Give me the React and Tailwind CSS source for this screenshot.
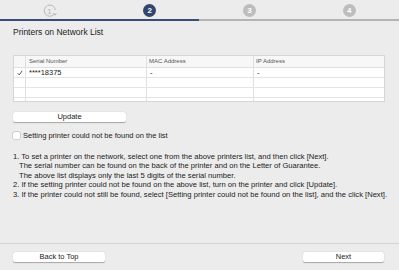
const STEPS = [1, 2, 3, 4];

const ROWS = [
  { checked: true, serial: "****18375", mac: "-", ip: "-" },
  { checked: false, serial: "", mac: "", ip: "" },
  { checked: false, serial: "", mac: "", ip: "" },
];

const NOTES = [
  { text: "1. To set a printer on the network, select one from the above printers list, and then click [Next].", indent: false },
  { text: "The serial number can be found on the back of the printer and on the Letter of Guarantee.", indent: true },
  { text: "The above list displays only the last 5 digits of the serial number.", indent: true },
  { text: "2. If the setting printer could not be found on the above list, turn on the printer and click [Update].", indent: false },
  { text: "3. If the printer could not still be found, select [Setting printer could not be found on the list], and the click [Next].", indent: false },
];

// First step is done: an open ring with an arrowhead around the number.
const DoneStep = () => (
  <svg width="14" height="14" viewBox="0 0 14 14" fill="none">
    <path d="M11.6 9.6 A5.6 5.6 0 1 1 12.4 6" stroke="#b9b9b9" strokeWidth="1" />
    <path d="M10.2 9.2 L11.9 11.2 L13.4 9" stroke="#b9b9b9" strokeWidth="1" fill="none" />
    <text x="6.6" y="10" textAnchor="middle" fontSize="8" fill="#b9b9b9" fontFamily="Liberation Sans, sans-serif">1</text>
  </svg>
);

const StepDot = ({ n, active }) => (
  <div
    className={`w-[13px] h-[13px] rounded-full flex items-center justify-center text-white text-[8px] font-bold leading-none ${
      active ? "bg-[#33466f]" : "bg-[#bdbdbd]"
    }`}
  >
    {n}
  </div>
);

const Check = () => (
  <svg width="6" height="6" viewBox="0 0 6 6" fill="none">
    <path d="M0.8 3.3 L2.3 4.9 L5.2 0.8" stroke="#444" strokeWidth="0.9" />
  </svg>
);

const MacButton = ({ children, className }) => (
  <button
    className={`h-[10px] bg-white rounded-[2px] shadow-[0_0.5px_1px_rgba(0,0,0,0.3)] text-[7.5px] leading-none text-[#222] flex items-center justify-center ${className}`}
  >
    {children}
  </button>
);

export default function App() {
  return (
    <div
      className="w-[399px] h-[270px] bg-[#ececec] flex flex-col overflow-hidden text-[#222]"
      style={{ fontFamily: '"Liberation Sans", Arial, sans-serif' }}
    >
      <div className="h-[19px] grid grid-cols-4 items-center pt-[2px]">
        {STEPS.map((n) => (
          <div key={n} className="flex justify-center">
            {n === 1 ? <DoneStep /> : <StepDot n={n} active={n === 2} />}
          </div>
        ))}
      </div>
      <div className="flex h-[2px]">
        <div className="w-[199px] bg-[#3a4d77]" />
        <div className="flex-1 bg-[#b4b4b4]" />
      </div>

      <div className="flex-1 px-[13px] flex flex-col">
        <div className="mt-[6px] text-[8.5px] leading-[10px]">Printers on Network List</div>

        <div className="mt-[18px] mr-[1px] bg-white border border-[#d6d6d6] text-[6px] text-[#555]">
          <div className="flex h-[12px] bg-[#f7f7f7] border-b border-[#e0e0e0]">
            <div className="w-[12px] border-r border-[#e0e0e0]" />
            <div className="w-[121px] border-r border-[#e0e0e0] pl-[3px] flex items-center">Serial Number</div>
            <div className="w-[107px] border-r border-[#e0e0e0] pl-[2px] flex items-center">MAC Address</div>
            <div className="flex-1 pl-[2px] flex items-center">IP Address</div>
          </div>
          {ROWS.map((row, i) => (
            <div key={i} className="flex h-[10px] border-b border-[#e4e4e4] text-[7.5px] text-[#222]">
              <div className="w-[12px] border-r border-[#e0e0e0] flex items-center justify-center">
                {row.checked && <Check />}
              </div>
              <div className="w-[121px] border-r border-[#e0e0e0] pl-[3px] flex items-center">{row.serial}</div>
              <div className="w-[107px] border-r border-[#e0e0e0] pl-[3px] flex items-center">{row.mac}</div>
              <div className="flex-1 pl-[3px] flex items-center">{row.ip}</div>
            </div>
          ))}
          <div className="flex h-[3px]">
            <div className="w-[12px] border-r border-[#e0e0e0]" />
            <div className="w-[121px] border-r border-[#e0e0e0]" />
            <div className="w-[107px] border-r border-[#e0e0e0]" />
            <div className="flex-1" />
          </div>
        </div>

        <MacButton className="mt-[10px] w-[113px]">Update</MacButton>

        <label className="mt-[10px] flex items-center gap-[3px] text-[7.5px] leading-none">
          <span className="w-[7px] h-[7px] bg-white rounded-[1.5px] shadow-[0_0_0_0.5px_rgba(0,0,0,0.25)]" />
          Setting printer could not be found on the list
        </label>

        <div className="mt-[12px] text-[7.6px] leading-[9.6px] whitespace-nowrap">
          {NOTES.map((note, i) => (
            <div key={i} className={note.indent ? "pl-[6px]" : ""}>
              {note.text}
            </div>
          ))}
        </div>
      </div>

      <div className="h-[27px] border-t border-[#d4d4d4] px-[13px] pt-[8px] flex justify-between items-start">
        <MacButton className="w-[92px]">Back to Top</MacButton>
        <MacButton className="w-[81px] mr-[2px]">Next</MacButton>
      </div>
    </div>
  );
}
